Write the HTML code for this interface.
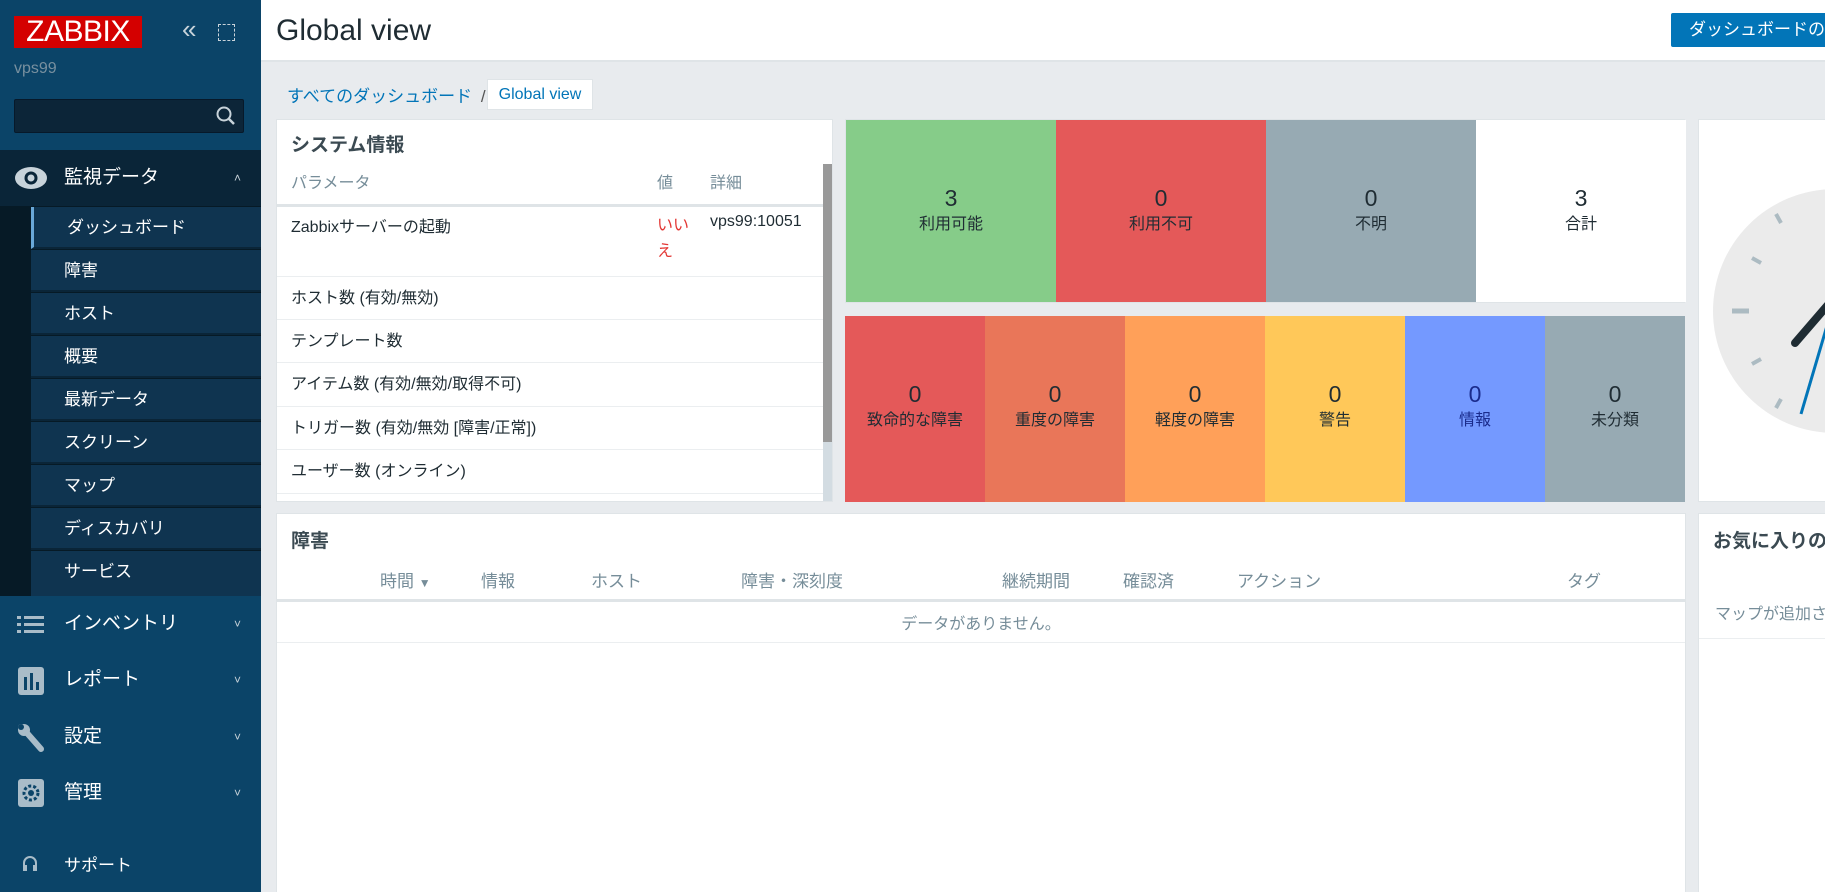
<!DOCTYPE html>
<html><head><meta charset="utf-8"><style>
*{box-sizing:border-box;margin:0;padding:0}
html,body{width:1825px;height:892px;overflow:hidden}
body{background:#e8ebee;font-family:"Liberation Sans","Noto Sans CJK JP",sans-serif;position:relative;color:#1f2c33}
.abs{position:absolute}
#side{left:0;top:0;width:261px;height:892px;background:#0b4468}
.logo{left:14px;top:16px;width:128px;height:32px;background:#d40000;color:#fff;font-size:30px;line-height:32px;text-align:center;letter-spacing:-0.5px}
.menu{left:0;width:261px;height:56px;color:#fff;font-size:19px;line-height:56px;padding-left:64px}
.chev{position:absolute;right:20px;top:0;font-size:12px;color:#c8d3da}
.sub{left:31px;width:230px;height:42px;background:#0f3450;color:#fff;font-size:17px;line-height:41px;padding-left:33px;border-bottom:2px solid #0a2538}
.wid{background:#fff;border:1px solid #dfe4e7}
.row{position:absolute;left:0;width:546px;border-bottom:1px solid #ebeef0;font-size:16px;padding-left:14px}
.cell{position:absolute;top:0;height:100%;text-align:center;font-size:16px}
.cell b{display:block;font-weight:normal;font-size:23px;line-height:24px;margin-bottom:0}
.th{position:absolute;top:567px;font-size:17px;color:#768d99}
</style></head><body>
<div id="side" class="abs">
 <div class="abs logo">ZABBIX</div>
 <div class="abs" style="left:182px;top:14px;color:#c8d3da;font-size:26px">«</div>
 <div class="abs" style="left:218px;top:24px;width:17px;height:17px;border:1px dashed #c8d3da"></div>
 <div class="abs" style="left:14px;top:60px;color:#78909f;font-size:16px">vps99</div>
 <div class="abs" style="left:14px;top:99px;width:230px;height:34px;background:#0c2538;border:1px solid #07192a;border-radius:2px"></div>
 <svg class="abs" style="left:215px;top:105px" width="22" height="22"><circle cx="9" cy="9" r="6.5" stroke="#c8d3da" stroke-width="2" fill="none"/><line x1="13.5" y1="13.5" x2="19" y2="19" stroke="#c8d3da" stroke-width="2.5"/></svg>
 <div class="abs" style="left:0;top:150px;width:261px;height:446px;background:#061a26"></div>
 <div class="abs menu" style="top:150px;background:#0a2538">監視データ<span class="chev">˄</span></div>
 <svg class="abs" style="left:14px;top:166px" width="34" height="24"><ellipse cx="17" cy="12" rx="16" ry="11" fill="#c8d3da"/><circle cx="17" cy="12" r="6.5" fill="#0a2538"/><circle cx="17" cy="12" r="3.5" fill="#c8d3da"/></svg>
 <div class="abs sub" style="top:207px;border-left:3px solid #6aa8d8">ダッシュボード</div>
 <div class="abs sub" style="top:250px">障害</div>
 <div class="abs sub" style="top:293px">ホスト</div>
 <div class="abs sub" style="top:336px">概要</div>
 <div class="abs sub" style="top:379px">最新データ</div>
 <div class="abs sub" style="top:422px">スクリーン</div>
 <div class="abs sub" style="top:465px">マップ</div>
 <div class="abs sub" style="top:508px">ディスカバリ</div>
 <div class="abs sub" style="top:551px;height:45px;border:none">サービス</div>
 <div class="abs menu" style="top:596px">インベントリ<span class="chev">˅</span></div>
 <div class="abs menu" style="top:652px">レポート<span class="chev">˅</span></div>
 <div class="abs menu" style="top:709px">設定<span class="chev">˅</span></div>
 <div class="abs menu" style="top:765px">管理<span class="chev">˅</span></div>
 <div class="abs menu" style="top:838px;font-size:17px">サポート</div>
 <svg class="abs" style="left:17px;top:614px" width="28" height="22" fill="#a9bcc8"><rect x="0" y="2" width="4" height="3"/><rect x="7" y="2" width="20" height="3"/><rect x="0" y="9" width="4" height="3"/><rect x="7" y="9" width="20" height="3"/><rect x="0" y="16" width="4" height="3"/><rect x="7" y="16" width="20" height="3"/></svg>
 <svg class="abs" style="left:18px;top:667px" width="26" height="28"><rect width="26" height="28" rx="3" fill="#a9bcc8"/><rect x="6" y="10" width="3" height="13" fill="#0b4468"/><rect x="12" y="6" width="3" height="17" fill="#0b4468"/><rect x="18" y="15" width="3" height="8" fill="#0b4468"/></svg>
 <svg class="abs" style="left:17px;top:723px" width="28" height="30"><path d="M4 4 L10 10 L24 26" stroke="#a9bcc8" stroke-width="6" stroke-linecap="round" fill="none"/><circle cx="7" cy="7" r="6" fill="#a9bcc8"/><circle cx="4" cy="4" r="3" fill="#0b4468"/></svg>
 <svg class="abs" style="left:18px;top:779px" width="26" height="28"><rect width="26" height="28" rx="3" fill="#a9bcc8"/><circle cx="13" cy="14" r="7" fill="none" stroke="#0b4468" stroke-width="3" stroke-dasharray="3 2"/><circle cx="13" cy="14" r="3" fill="#0b4468"/></svg>
 <svg class="abs" style="left:22px;top:855px" width="16" height="20"><path d="M2 12 V8 a6 6 0 0 1 12 0 V12" stroke="#a9bcc8" stroke-width="2" fill="none"/><rect x="1" y="10" width="4" height="6" fill="#a9bcc8"/><rect x="11" y="10" width="4" height="6" fill="#a9bcc8"/></svg>
</div>
<div class="abs" style="left:261px;top:0;width:1564px;height:62px;background:#fff;border-bottom:2px solid #dfe4e7"></div>
<div class="abs" style="left:276px;top:14px;font-size:30px;color:#1f2c33">Global view</div>
<div class="abs" style="left:1671px;top:13px;width:160px;height:34px;background:#0275b8;border-radius:2px;color:#fff;font-size:17px;line-height:34px;padding-left:18px;white-space:nowrap">ダッシュボードの編集</div>
<div class="abs" style="left:287px;top:82px;font-size:17px;color:#0275b8">すべてのダッシュボード <span style="color:#555;margin-left:4px">/</span></div>
<div class="abs" style="left:487px;top:79px;width:106px;height:31px;background:#fff;border:1px solid #dfe4e7;color:#0275b8;font-size:16px;line-height:29px;text-align:center">Global view</div>

<div class="abs wid" style="left:276px;top:119px;width:557px;height:383px;overflow:hidden">
 <div class="abs" style="left:14px;top:10px;font-size:19px;font-weight:bold;color:#3b4a52">システム情報</div>
 <div class="abs" style="left:546px;top:44px;width:11px;height:340px;background:#d3dce2"></div>
 <div class="abs" style="left:546px;top:44px;width:11px;height:278px;background:#999"></div>
 <div class="row" style="top:44px;height:43px;border-bottom:3px solid #dfe4e7;color:#768d99;line-height:40px">パラメータ<span style="position:absolute;left:380px">値</span><span style="position:absolute;left:433px">詳細</span></div>
 <div class="row" style="top:87px;height:70px;padding-top:6px">Zabbixサーバーの起動<span style="position:absolute;left:380px;top:6px;color:#e33734;width:40px;line-height:26px">いいえ</span><span style="position:absolute;left:433px;top:6px">vps99:10051</span></div>
 <div class="row" style="top:157px;height:43px;line-height:43px">ホスト数 (有効/無効)</div>
 <div class="row" style="top:200px;height:43px;line-height:43px">テンプレート数</div>
 <div class="row" style="top:243px;height:44px;line-height:44px">アイテム数 (有効/無効/取得不可)</div>
 <div class="row" style="top:287px;height:43px;line-height:43px">トリガー数 (有効/無効 [障害/正常])</div>
 <div class="row" style="top:330px;height:44px;line-height:44px">ユーザー数 (オンライン)</div>
</div>

<div class="abs wid" style="left:845px;top:119px;width:840px;height:184px">
 <div class="cell" style="left:0;width:210px;background:#86cc89;padding-top:66px"><b>3</b>利用可能</div>
 <div class="cell" style="left:210px;width:210px;background:#e45959;padding-top:66px"><b>0</b>利用不可</div>
 <div class="cell" style="left:420px;width:210px;background:#97aab3;padding-top:66px"><b>0</b>不明</div>
 <div class="cell" style="left:630px;width:210px;background:#fff;padding-top:66px"><b>3</b>合計</div>
</div>
<div class="abs" style="left:845px;top:316px;width:840px;height:186px">
 <div class="cell" style="left:0;width:140px;background:#e45959;padding-top:66px"><b>0</b>致命的な障害</div>
 <div class="cell" style="left:140px;width:140px;background:#e97659;padding-top:66px"><b>0</b>重度の障害</div>
 <div class="cell" style="left:280px;width:140px;background:#ffa059;padding-top:66px"><b>0</b>軽度の障害</div>
 <div class="cell" style="left:420px;width:140px;background:#ffc859;padding-top:66px"><b>0</b>警告</div>
 <div class="cell" style="left:560px;width:140px;background:#7499ff;padding-top:66px;color:#1a2b8c"><b>0</b>情報</div>
 <div class="cell" style="left:700px;width:140px;background:#97aab3;padding-top:66px"><b>0</b>未分類</div>
</div>

<div class="abs wid" style="left:1698px;top:119px;width:140px;height:383px;overflow:hidden">
 <svg class="abs" style="left:0;top:0" width="140" height="383">
  <circle cx="136" cy="191" r="122" fill="#ebebeb"/>
  <g stroke="#acbbc2" stroke-width="4"><line x1="33" y1="191" x2="50" y2="191" stroke-width="5"/><line x1="53" y1="138" x2="62" y2="143"/><line x1="77" y1="94" x2="82" y2="103"/><line x1="53" y1="244" x2="62" y2="239"/><line x1="77" y1="288" x2="82" y2="279"/></g>
  <line x1="96" y1="223" x2="140" y2="172" stroke="#1f2c33" stroke-width="8" stroke-linecap="round"/>
  <line x1="102" y1="294" x2="140" y2="165" stroke="#0275b8" stroke-width="3"/>
 </svg>
</div>

<div class="abs wid" style="left:276px;top:513px;width:1410px;height:390px">
 <div class="abs" style="left:14px;top:12px;font-size:19px;font-weight:bold;color:#3b4a52">障害</div>
 <div class="abs" style="left:0;top:85px;width:1408px;height:3px;background:#dfe4e7"></div>
 <div class="abs" style="left:0;top:128px;width:1408px;height:1px;background:#ebeef0"></div>
 <div class="abs" style="left:0;top:96px;width:1408px;text-align:center;font-size:16px;color:#768d99">データがありません。</div>
</div>
<div class="th" style="left:380px">時間 <span style="font-size:12px">▼</span></div>
<div class="th" style="left:481px">情報</div>
<div class="th" style="left:591px">ホスト</div>
<div class="th" style="left:741px">障害・深刻度</div>
<div class="th" style="left:1002px">継続期間</div>
<div class="th" style="left:1123px">確認済</div>
<div class="th" style="left:1237px">アクション</div>
<div class="th" style="left:1567px">タグ</div>

<div class="abs wid" style="left:1698px;top:513px;width:140px;height:390px;overflow:hidden">
 <div class="abs" style="left:14px;top:12px;font-size:19px;font-weight:bold;color:#3b4a52;white-space:nowrap">お気に入りのマップ</div>
 <div class="abs" style="left:16px;top:86px;font-size:16px;color:#768d99;white-space:nowrap">マップが追加されていません。</div>
 <div class="abs" style="left:0;top:88px;width:140px;height:1px;background:#ebeef0;margin-top:36px"></div>
</div>
</body></html>
